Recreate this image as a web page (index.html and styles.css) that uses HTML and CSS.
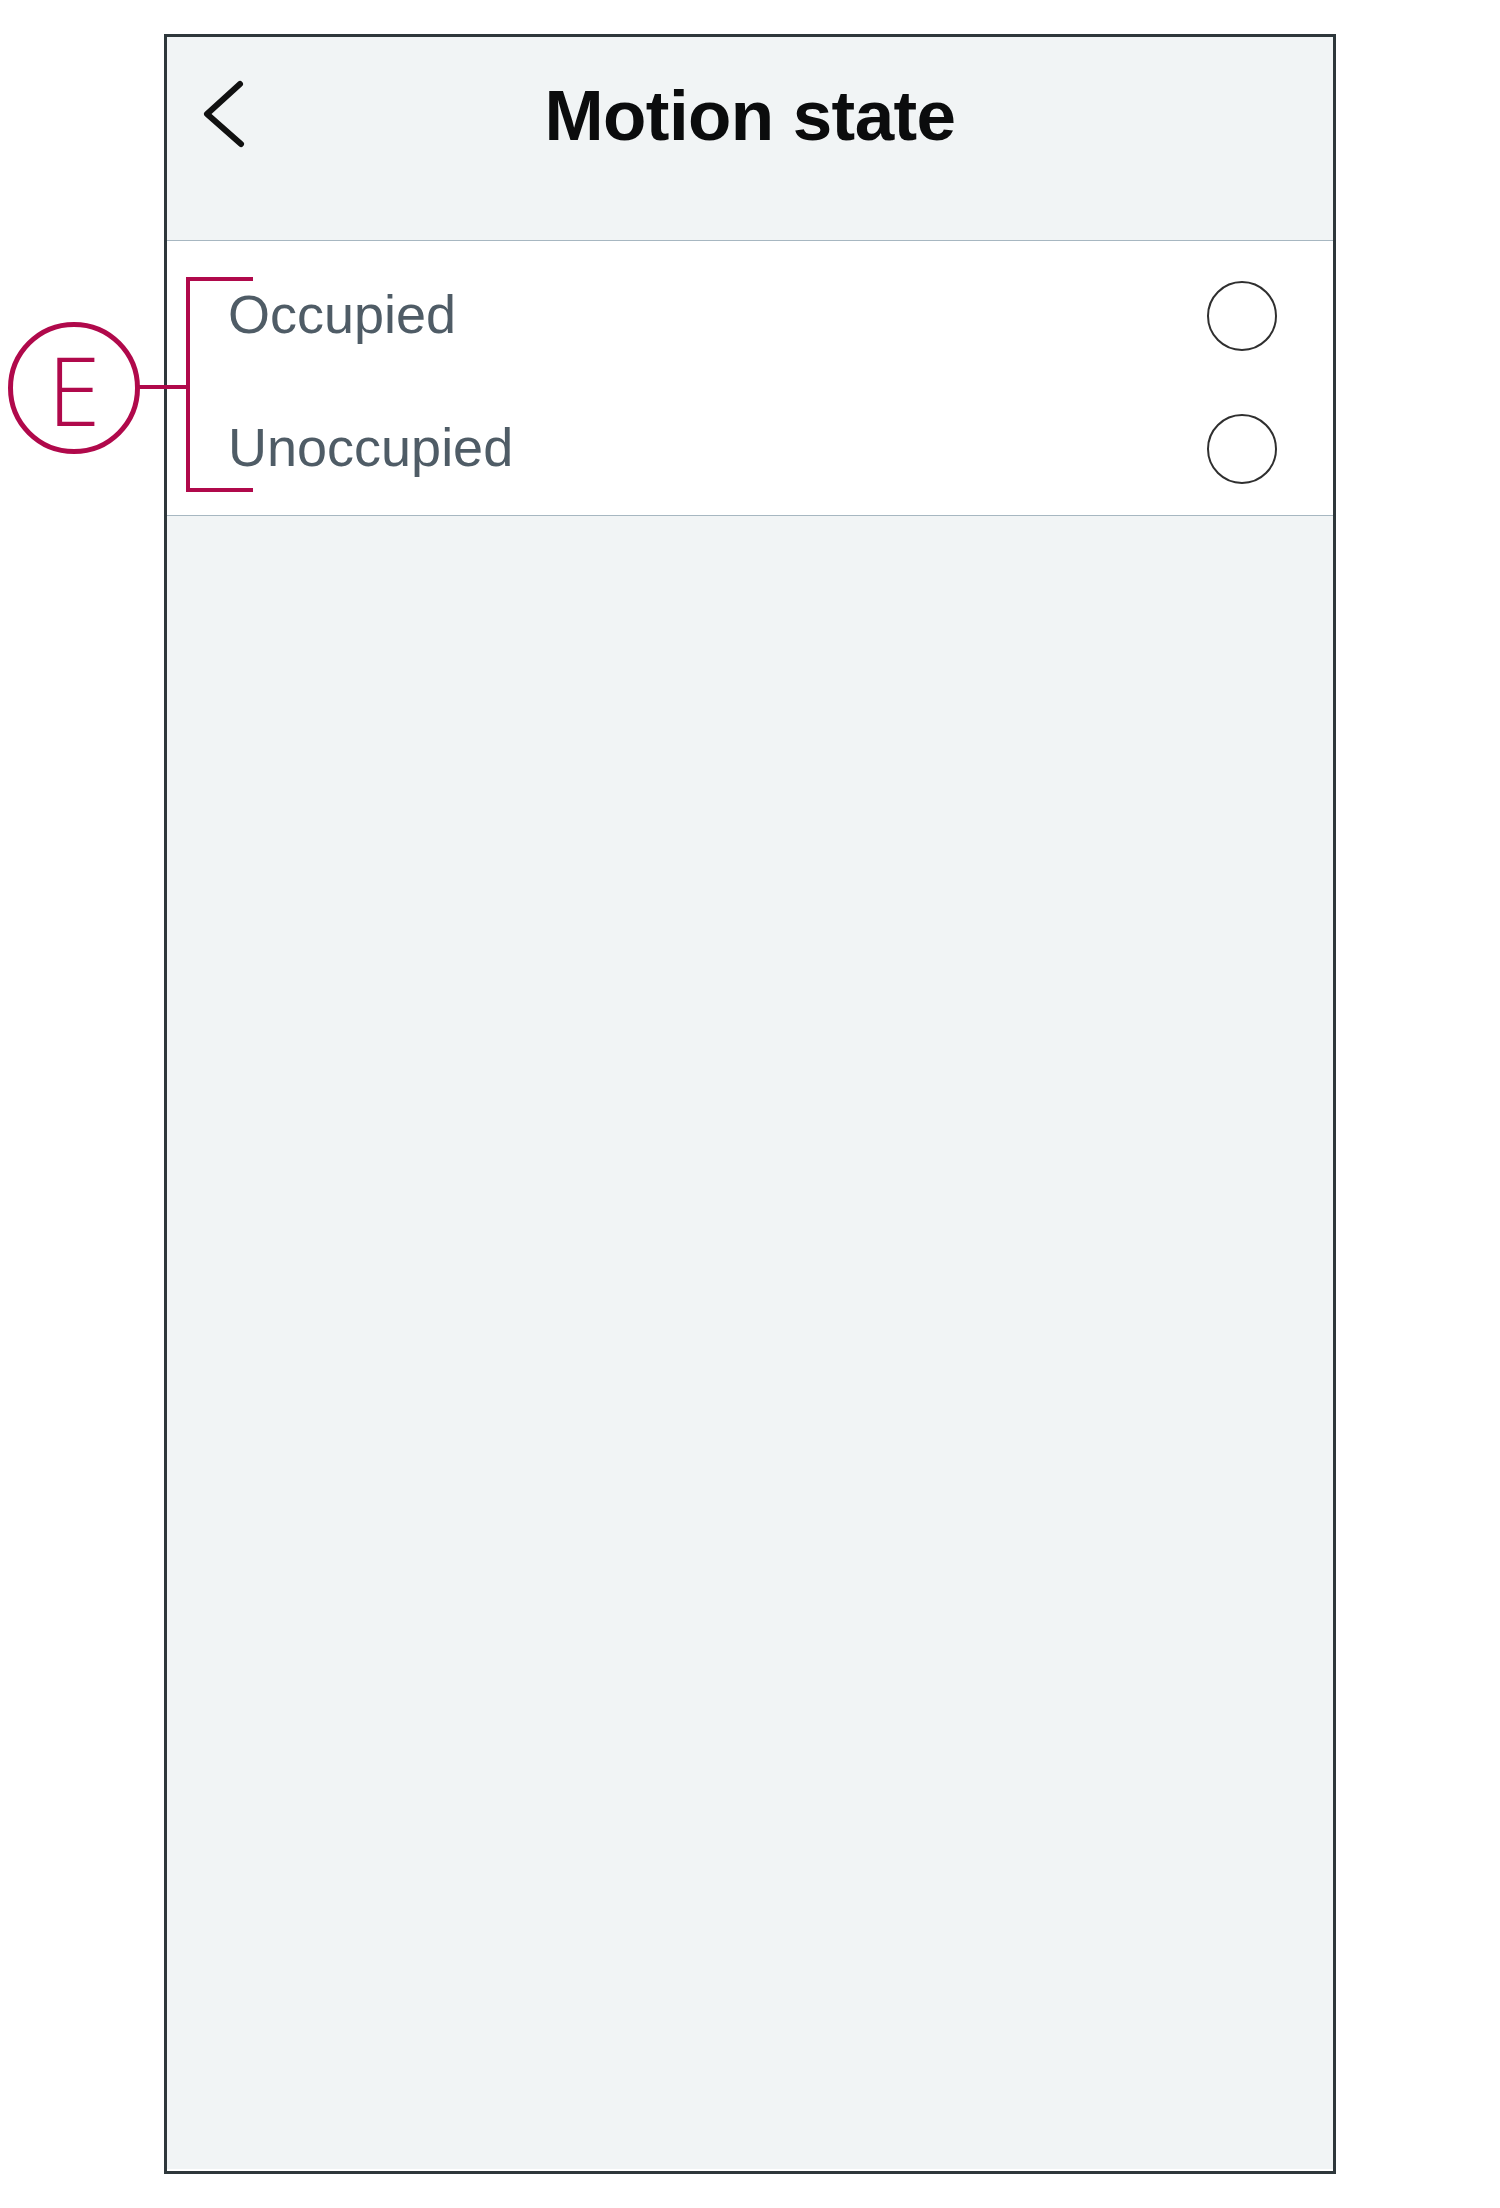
FILE: index.html
```html
<!DOCTYPE html>
<html lang="en">
<head>
<meta charset="utf-8">
<title>Motion state</title>
<link rel="stylesheet" href="styles.css">
</head>
<body>
<div class="screen">
  <header class="topbar">
    <button class="back" aria-label="Back">
      <svg width="48" height="72" viewBox="0 0 48 72">
        <path d="M40 6 L7 36 L41 66" fill="none" stroke="#111" stroke-width="6" stroke-linecap="round" stroke-linejoin="round"/>
      </svg>
    </button>
    <h1 class="title">Motion state</h1>
    <span class="spacer"></span>
  </header>
  <ul class="options">
    <li class="option"><span class="label">Occupied</span><span class="radio"></span></li>
    <li class="option"><span class="label">Unoccupied</span><span class="radio"></span></li>
  </ul>
</div>
<div class="callout">
  <div class="badge"><span class="badge-letter">E</span></div>
  <div class="connector"></div>
  <div class="bracket"></div>
</div>
</body>
</html>
```
FILE: styles.css
```css
html, body {
  margin: 0;
  padding: 0;
  background: #ffffff;
}

body {
  position: relative;
  font-family: "Liberation Sans", Arial, sans-serif;
}

.screen {
  box-sizing: border-box;
  margin: 34px 0 0 164px;
  width: 1172px;
  height: 2140px;
  border: 3px solid #2e373b;
  background: #f1f4f5;
  box-shadow: inset 0 -2px 0 #ffffff;
  display: flex;
  flex-direction: column;
}

.topbar {
  box-sizing: border-box;
  height: 204px;
  padding-top: 43px;
  border-bottom: 1px solid #a7b7c1;
  display: grid;
  grid-template-columns: 1fr auto 1fr;
  align-items: start;
}

.back {
  justify-self: start;
  margin: -2px 0 0 33px;
  padding: 0;
  border: 0;
  background: none;
  width: 48px;
  height: 72px;
  display: block;
}

.back svg {
  display: block;
}

.title {
  margin: 0;
  font-family: "Liberation Sans", Arial, sans-serif;
  font-weight: 700;
  font-size: 71px;
  line-height: 71px;
  letter-spacing: -0.6px;
  color: #0b0c0d;
  white-space: nowrap;
}

.options {
  list-style: none;
  margin: 0;
  padding: 8px 0 0;
  background: #ffffff;
  border-bottom: 1px solid #a7b7c1;
}

.option {
  height: 133px;
  display: flex;
  align-items: center;
  justify-content: space-between;
  padding: 0 56px 0 61px;
}

.label {
  font-size: 54px;
  color: #4f5c66;
  margin-top: -4px;
}

.radio {
  box-sizing: border-box;
  width: 70px;
  height: 70px;
  border: 2px solid #2f2f2f;
  border-radius: 50%;
  background: #ffffff;
}

/* annotation overlay */
.callout {
  position: absolute;
  left: 0;
  top: 0;
}

.badge {
  position: absolute;
  left: 8px;
  top: 322px;
  box-sizing: border-box;
  width: 132px;
  height: 132px;
  border: 5px solid #b0094b;
  border-radius: 50%;
  background: #ffffff;
  display: flex;
  align-items: center;
  justify-content: center;
}

.badge-letter {
  font-family: "Open Sans", "Liberation Sans", sans-serif;
  font-weight: 300;
  font-size: 95px;
  line-height: 1;
  color: #b0094b;
  margin-top: 2px;
}

.connector {
  position: absolute;
  left: 139px;
  top: 385px;
  width: 48px;
  height: 3.5px;
  background: #b0094b;
}

.bracket {
  position: absolute;
  left: 186px;
  top: 277px;
  box-sizing: border-box;
  width: 67px;
  height: 215px;
  border: 4px solid #b0094b;
  border-right: 0;
}
```
